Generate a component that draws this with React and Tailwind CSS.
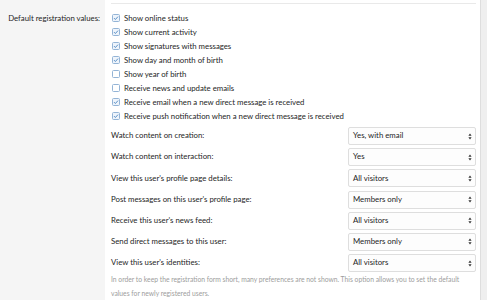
const checks = [
  ['Show online status', true],
  ['Show current activity', true],
  ['Show signatures with messages', true],
  ['Show day and month of birth', true],
  ['Show year of birth', false],
  ['Receive news and update emails', false],
  ['Receive email when a new direct message is received', true],
  ['Receive push notification when a new direct message is received', true],
]

const selects = [
  ['Watch content on creation:', 'Yes, with email'],
  ['Watch content on interaction:', 'Yes'],
  ["View this user's profile page details:", 'All visitors'],
  ["Post messages on this user's profile page:", 'Members only'],
  ["Receive this user's news feed:", 'All visitors'],
  ['Send direct messages to this user:', 'Members only'],
  ["View this user's identities:", 'All visitors'],
]

function Box({ on }) {
  return (
    <svg width="8" height="8" viewBox="0 0 8 8" className="shrink-0">
      <rect x="0.5" y="0.5" width="7" height="7" rx="1" fill={on ? '#eef4fb' : '#fff'} stroke="#94b4d6" />
      {on && <path d="M2 4.1 L3.4 5.5 L6 2.6" fill="none" stroke="#4a84bf" strokeWidth="0.9" />}
    </svg>
  )
}

function Arrows() {
  return (
    <svg width="4" height="7" viewBox="0 0 4 7" className="shrink-0">
      <path d="M2 0.5 L3.6 2.8 L0.4 2.8 Z" fill="#333" />
      <path d="M2 6.5 L3.6 4.2 L0.4 4.2 Z" fill="#333" />
    </svg>
  )
}

export default function App() {
  return (
    <div className="w-[487px] h-[300px] flex overflow-hidden bg-[#f5f5f5] text-[#1e1e1e] text-[7.8px]"
      style={{ fontFamily: 'Lato, "Open Sans", sans-serif' }}>
      <div className="w-[105px] shrink-0 pt-[11px] pr-[5px] text-right leading-[14px] whitespace-nowrap">
        Default registration values:
      </div>

      <div className="w-[375px] shrink-0 bg-white pl-[6px] pr-[4px] pt-[3px]">
        <div className="border-t border-[#e9e9e9]" />
        <div className="pt-[7px] flex flex-col">
          {checks.map(([label, on]) => (
            <div key={label} className="h-[14px] flex items-center gap-[4px] pl-[1px]">
              <Box on={on} />
              <span className="leading-[14px] whitespace-nowrap">{label}</span>
            </div>
          ))}
        </div>
        <div className="pt-[4px] flex flex-col gap-[3.2px]">
          {selects.map(([label, value]) => (
            <div key={label} className="h-[18px] flex items-center justify-between">
              <span className="whitespace-nowrap">{label}</span>
              <div className="w-[128px] h-[18px] border border-[#dedede] rounded-[2px] bg-[#fdfdfd] flex items-center justify-between pl-[4px] pr-[3px]">
                <span>{value}</span>
                <Arrows />
              </div>
            </div>
          ))}
        </div>
        <div className="mt-0 text-[6.75px] leading-[14px] text-[#9d9d9d] whitespace-nowrap">
          <div>In order to keep the registration form short, many preferences are not shown. This option allows you to set the default</div>
          <div>values for newly registered users.</div>
        </div>
      </div>

      <div className="flex-1 border-l border-[#dedede] bg-[#efefef]" />
    </div>
  )
}
